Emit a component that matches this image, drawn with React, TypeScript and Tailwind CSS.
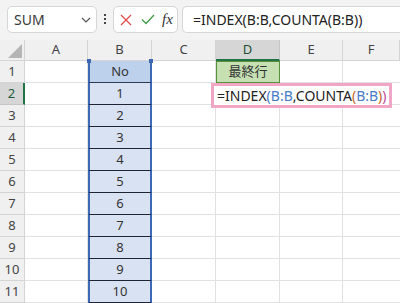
import React from 'react';

const cols = ['A', 'B', 'C', 'D', 'E', 'F'];
const rows = Array.from({ length: 11 }, (_, i) => i + 1);
const bValues = ['No', '1', '2', '3', '4', '5', '6', '7', '8', '9', '10'];

const font = { fontFamily: '"Noto Sans", "Noto Sans CJK JP", sans-serif' };

const Toolbar = () => (
  <div className="flex h-[40px] items-start bg-[#f3f3f3] pt-[6px]">
    <div className="ml-[7px] flex h-[27px] w-[90px] items-center justify-between rounded-[5px] border border-[#d6d6d6] bg-white pl-[6px] pr-[5px]">
      <span className="text-[14px] text-[#3a3a3a]">SUM</span>
      <svg width="10" height="6" viewBox="0 0 10 6">
        <path d="M1 1l4 4 4-4" fill="none" stroke="#555" strokeWidth="1.2" />
      </svg>
    </div>
    <div className="ml-[7px] mt-[8px] flex flex-col gap-[2px]">
      <span className="h-[2px] w-[2px] bg-[#444]" />
      <span className="h-[2px] w-[2px] bg-[#444]" />
      <span className="h-[2px] w-[2px] bg-[#444]" />
    </div>
    <div className="ml-[7px] flex h-[27px] w-[65px] items-center rounded-[5px] border border-[#d6d6d6] bg-white pl-[6px]">
      <svg width="12" height="12" viewBox="0 0 12 12">
        <path d="M1 1l10 10M11 1L1 11" stroke="#e24b4b" strokeWidth="1.3" />
      </svg>
      <svg className="ml-[9px]" width="14" height="11" viewBox="0 0 14 11">
        <path d="M1 5.5l4 4L13 1" fill="none" stroke="#3f9b48" strokeWidth="1.3" />
      </svg>
      <span className="ml-[7px] text-[15px] italic leading-none text-[#333]" style={{ fontFamily: '"Liberation Serif", serif' }}>
        fx
      </span>
    </div>
    <div className="ml-[4px] flex h-[27px] flex-1 items-center rounded-l-[5px] border border-r-0 border-[#d6d6d6] bg-white pl-[10px]">
      <span className="text-[14px] text-[#222]">=INDEX(B:B,COUNTA(B:B))</span>
    </div>
  </div>
);

export default function App() {
  return (
    <div className="relative h-[303px] w-[400px] overflow-hidden bg-white" style={font}>
      <Toolbar />
      <div className="grid grid-cols-[25px_63px_64px_64px_64px_63px_1fr] grid-rows-[21px_repeat(11,22px)]">
        {/* header row */}
        <div className="relative border-b border-r border-[#d4d4d4] bg-[#f0f0f0]">
          <div className="absolute bottom-[2px] right-[2px] h-0 w-0 border-b-[14px] border-l-[14px] border-b-[#b5b5b5] border-l-transparent" />
        </div>
        {cols.map((c) =>
          c === 'D' ? (
            <div key={c} className="flex items-center justify-center border-b-2 border-r border-b-[#217346] border-r-[#c6c6c6] bg-[#d6d6d6] text-[13px] text-[#1f4e33]">
              {c}
            </div>
          ) : (
            <div key={c} className="flex items-center justify-center border-b border-r border-[#d4d4d4] bg-[#f0f0f0] text-[13px] text-[#444]">
              {c}
            </div>
          )
        )}
        {rows.map((r, i) => (
          <React.Fragment key={r}>
            {r === 2 ? (
              <div className="flex items-center justify-center border-b border-r-2 border-b-[#c6c6c6] border-r-[#217346] bg-[#d6d6d6] text-[13px] text-[#1f5c38]">
                {r}
              </div>
            ) : (
              <div className="flex items-center justify-center border-b border-r border-[#d4d4d4] bg-[#f0f0f0] text-[13px] text-[#444]">
                {r}
              </div>
            )}
            <div className="border-b border-r border-[#e1e1e1]" />
            <div
              className={`relative flex items-center justify-center border-b border-x-2 border-x-[#3b69b5] text-[13px] text-[#333] ${
                i === 0 ? 'border-b-[#2a3a55] bg-[#bdd0ec]' : 'border-b-[#1d2534] bg-[#d9e2f3]'
              }`}
            >
              {i === 0 && (
                <>
                  <span className="absolute -left-[3px] -top-[2px] h-[4px] w-[4px] bg-[#3b69b5]" />
                  <span className="absolute -right-[3px] -top-[2px] h-[4px] w-[4px] bg-[#3b69b5]" />
                </>
              )}
              {bValues[i]}
            </div>
            <div className="border-b border-r border-[#e1e1e1]" />
            {r === 1 ? (
              <div className="flex items-center justify-center border border-[#5a8f3c] bg-[#c6e0b4] text-[13px] text-[#333]">
                最終行
              </div>
            ) : (
              <div className="border-b border-r border-[#e1e1e1]" />
            )}
            <div className="border-b border-r border-[#e1e1e1]" />
            <div className="border-b border-[#e1e1e1]" />
          </React.Fragment>
        ))}
      </div>
      {/* in-cell formula editor */}
      <div className="absolute left-[211px] top-[83px] flex h-[25px] w-[181px] items-center border-[3px] border-[#f2a6c6] bg-white pl-[3px] text-[14px] text-[#222]">
        =INDEX<span className="text-[#4a7ac8]">(</span>
        <span className="text-[#4a7ac8]">B:B</span>,COUNTA<span className="text-[#c4662a]">(</span>
        <span className="text-[#4a7ac8]">B:B</span>
        <span className="text-[#c4662a]">)</span>
        <span className="text-[#c04b9a]">)</span>
      </div>
    </div>
  );
}
